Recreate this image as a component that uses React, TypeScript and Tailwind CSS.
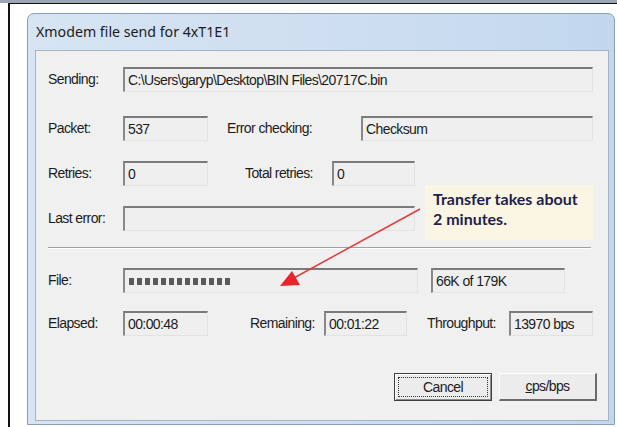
import React from 'react'

// Classic sunken read-only edit box
function Field({ className = '', children }: { className?: string; children?: React.ReactNode }) {
  return (
    <div
      className={`h-[25px] shrink-0 flex items-center pl-[3px] bg-[#efefef] border-t-2 border-l-2 border-r border-b border-t-[#7a7a7a] border-l-[#888888] border-r-[#e2e2e2] border-b-[#e2e2e2] overflow-hidden whitespace-nowrap ${className}`}
    >
      {children}
    </div>
  )
}

function Label({ className = '', children }: { className?: string; children: React.ReactNode }) {
  return <div className={`shrink-0 whitespace-nowrap ${className}`}>{children}</div>
}

const BLOCKS = Array.from({ length: 13 })

export default function App() {
  return (
    <div className="relative w-[617px] h-[427px] overflow-hidden bg-white">
      {/* strip above the frame */}
      <div className="h-[3px] bg-[#9aa6b2]" />
      <div className="ml-[8px] h-[424px] border-l-2 border-t border-[#111] pl-[17px] pt-[9px]">
        {/* window */}
        <div className="w-[588px] h-[412px] rounded-t-[7px] border border-[#8aa0b8] bg-gradient-to-r from-[#d6e4f3] via-[#cfdff1] to-[#c2d7ee] flex flex-col">
          {/* title bar */}
          <div className="h-[36px] shrink-0 flex items-center pl-[8px] text-[14.2px] text-[#1b1b1b] font-['Noto_Sans',sans-serif]">
            Xmodem file send for 4xT1E1
          </div>
          {/* client area */}
          <div className="ml-[7px] mr-[5px] mb-[3px] flex-1 bg-[#f0f0f0] border border-[#a5b3c2] pl-[12px] flex flex-col text-[14px] tracking-[-0.6px] text-[#1c1c1c] font-['Liberation_Sans',Arial,sans-serif]">
            {/* Sending */}
            <div className="mt-[16px] flex items-center">
              <Label className="w-[75px]">Sending:</Label>
              <Field className="w-[470px]">C:\Users\garyp\Desktop\BIN Files\20717C.bin</Field>
            </div>
            {/* Packet / Error checking */}
            <div className="mt-[24px] flex items-center">
              <Label className="w-[75px]">Packet:</Label>
              <Field className="w-[85px]">537</Field>
              <Label className="ml-[19px] w-[134px]">Error checking:</Label>
              <Field className="w-[232px]">Checksum</Field>
            </div>
            {/* Retries / Total retries */}
            <div className="mt-[20px] flex items-center">
              <Label className="w-[75px]">Retries:</Label>
              <Field className="w-[85px]">0</Field>
              <Label className="ml-[37px] w-[87px]">Total retries:</Label>
              <Field className="w-[83px]">0</Field>
            </div>
            {/* Last error */}
            <div className="mt-[20px] flex items-center">
              <Label className="w-[75px]">Last error:</Label>
              <Field className="w-[292px]" />
            </div>
            {/* divider */}
            <div className="mt-[16px] mr-[17px] h-[2px] border-t border-b border-t-[#a0a0a0] border-b-white" />
            {/* File progress */}
            <div className="mt-[19px] flex items-center">
              <Label className="w-[75px]">File:</Label>
              <Field className="w-[295px] pl-[4px] gap-[3px]">
                {BLOCKS.map((_, i) => (
                  <span key={i} className="w-[5px] h-[7px] bg-[#5a5a5a]" />
                ))}
              </Field>
              <Field className="ml-[13px] w-[134px]">66K of 179K</Field>
            </div>
            {/* Elapsed / Remaining / Throughput */}
            <div className="mt-[18px] flex items-center">
              <Label className="w-[75px]">Elapsed:</Label>
              <Field className="w-[85px]">00:00:48</Field>
              <Label className="ml-[42px] w-[74px]">Remaining:</Label>
              <Field className="w-[83px]">00:01:22</Field>
              <Label className="ml-[20px] w-[82px]">Throughput:</Label>
              <Field className="w-[84px]">13970 bps</Field>
            </div>
            {/* buttons */}
            <div className="mt-[37px] flex items-center justify-end pr-[11px] gap-[7px]">
              <button className="w-[98px] h-[28px] p-[3px] bg-[#ececec] border border-[#3f3f3f] shadow-[inset_1px_1px_0_#ffffff,inset_-1px_-1px_0_#8c8c8c]">
                <div className="w-full h-full flex items-center justify-center border border-dotted border-[#333]">
                  Cancel
                </div>
              </button>
              <button className="w-[98px] h-[28px] flex items-center justify-center bg-[#ececec] border-t border-l border-r-2 border-b-2 border-t-white border-l-[#f8f8f8] border-r-[#6b6b6b] border-b-[#6b6b6b]">
                <span><span className="underline">c</span>ps/bps</span>
              </button>
            </div>
          </div>
        </div>
      </div>

      {/* callout note */}
      <div className="absolute left-[425px] top-[185px] w-[168px] h-[55px] bg-[#fbf5e3] pl-[8px] pt-[4px] text-[16px] leading-[20px] font-bold text-[#1f1f4d] font-['Lato',sans-serif]">
        Transfer takes about
        <br />
        2 minutes.
      </div>

      {/* red pointer arrow */}
      <svg className="absolute inset-0 pointer-events-none" width="617" height="427" viewBox="0 0 617 427">
        <line x1="420" y1="209" x2="292" y2="279" stroke="#e23a3a" strokeWidth="1.5" />
        <path d="M280 286 L292 271 L300 285 Z" fill="#e8262a" />
      </svg>
    </div>
  )
}
